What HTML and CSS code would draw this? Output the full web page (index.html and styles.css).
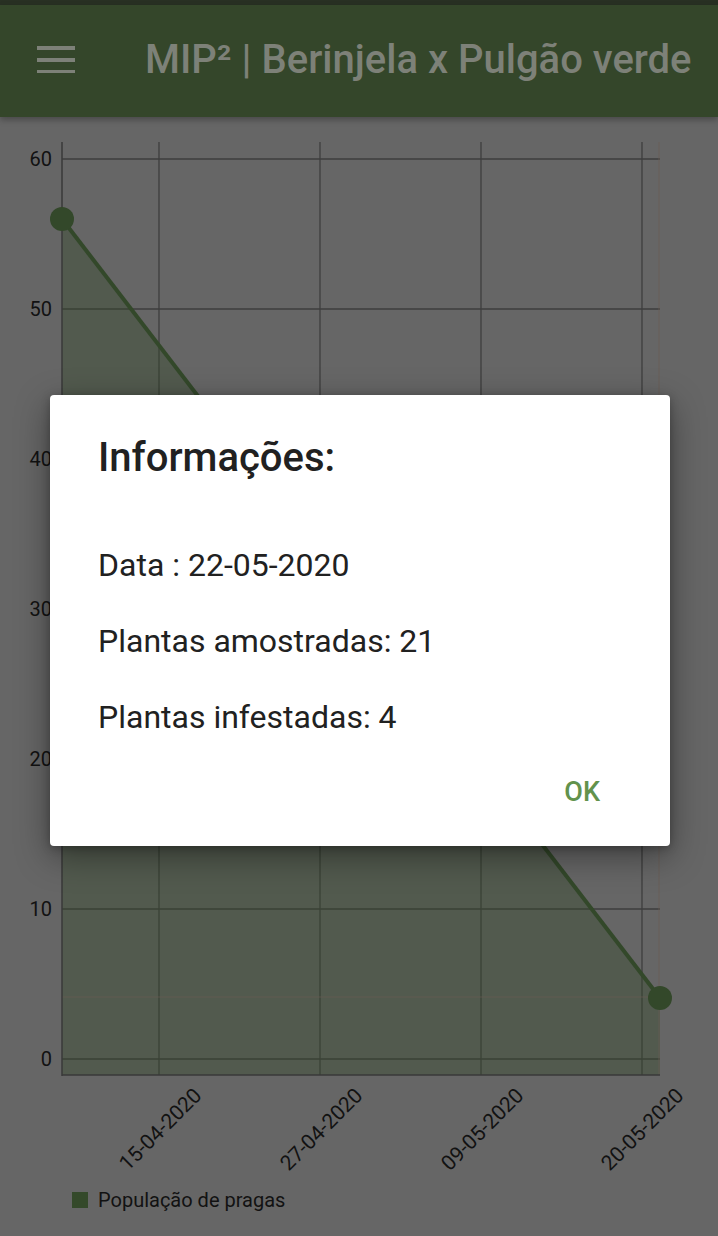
FILE: index.html
```html
<!DOCTYPE html>
<html lang="pt">
<head>
<meta charset="utf-8">
<title>MIP² | Berinjela x Pulgão verde</title>
<link rel="stylesheet" href="styles.css">
</head>
<body>
<div class="status"></div>
<header class="appbar">
  <svg class="menu" width="38" height="28" viewBox="0 0 38 28" aria-hidden="true">
    <rect x="0" y="1" width="38" height="4" fill="#7d8178"/>
    <rect x="0" y="13" width="38" height="4" fill="#7d8178"/>
    <rect x="0" y="25" width="38" height="4" fill="#7d8178"/>
  </svg>
  <h1 class="title">MIP² | Berinjela x Pulgão verde</h1>
</header>
<main class="content">
  <svg class="chart" width="718" height="1065" viewBox="0 117 718 1065">
    <g class="grid">
      <line x1="62" y1="159" x2="660" y2="159"/>
      <line x1="62" y1="309" x2="660" y2="309"/>
      <line x1="62" y1="459" x2="660" y2="459"/>
      <line x1="62" y1="609" x2="660" y2="609"/>
      <line x1="62" y1="759" x2="660" y2="759"/>
      <line x1="62" y1="909" x2="660" y2="909"/>
      <line x1="62" y1="1059" x2="660" y2="1059"/>
      <line x1="159" y1="142" x2="159" y2="1075"/>
      <line x1="320" y1="142" x2="320" y2="1075"/>
      <line x1="481" y1="142" x2="481" y2="1075"/>
      <line x1="642" y1="142" x2="642" y2="1075"/>
    </g>
    <polygon class="area" points="62,219 660,998 660,1075 62,1075"/>
    <g class="highlight">
      <line x1="659" y1="142" x2="659" y2="1075"/>
      <line x1="62" y1="997" x2="660" y2="997"/>
    </g>
    <g class="axis">
      <line x1="62" y1="142" x2="62" y2="1076"/>
      <line x1="62" y1="1075" x2="660" y2="1075"/>
    </g>
    <polyline class="series" points="62,219 660,998"/>
    <circle class="dot" cx="62" cy="219" r="12"/>
    <circle class="dot" cx="660" cy="998" r="12"/>
    <g class="ylabels">
      <text x="52" y="166">60</text>
      <text x="52" y="316">50</text>
      <text x="52" y="466">40</text>
      <text x="52" y="616">30</text>
      <text x="52" y="766">20</text>
      <text x="52" y="916">10</text>
      <text x="52" y="1066">0</text>
    </g>
    <g class="xlabels">
      <text transform="translate(160 1129) rotate(-45)" y="7.5">15-04-2020</text>
      <text transform="translate(321 1129) rotate(-45)" y="7.5">27-04-2020</text>
      <text transform="translate(482 1129) rotate(-45)" y="7.5">09-05-2020</text>
      <text transform="translate(642 1129) rotate(-45)" y="7.5">20-05-2020</text>
    </g>
  </svg>
  <div class="legend">
    <span class="swatch"></span>
    <span class="legend-text">População de pragas</span>
  </div>
</main>

<div class="dialog" role="dialog">
  <h2 class="dialog-title">Informações:</h2>
  <p class="dialog-line">Data : 22-05-2020</p>
  <p class="dialog-line">Plantas amostradas: 21</p>
  <p class="dialog-line">Plantas infestadas: 4</p>
  <div class="dialog-actions">
    <button class="ok">OK</button>
  </div>
</div>
</body>
</html>
```
FILE: styles.css
```css
html, body {
  margin: 0;
  padding: 0;
}
body {
  width: 718px;
  height: 1236px;
  overflow: hidden;
  background: #666666;
  font-family: Roboto, "Liberation Sans", sans-serif;
  position: relative;
}
.status {
  height: 5px;
  background: #283023;
}
.appbar {
  height: 112px;
  background: #34462a;
  display: flex;
  align-items: center;
  padding-left: 37px;
  box-shadow: 0 3px 6px rgba(0, 0, 0, 0.28);
  position: relative;
  z-index: 1;
}
.menu {
  display: block;
  margin-top: -4px;
}
.title {
  margin: -3px 0 0 70px;
  font-size: 40px;
  font-weight: 500;
  color: #7d8178;
  white-space: nowrap;
  line-height: 48px;
}
.content {
  display: flex;
  flex-direction: column;
}
.chart {
  display: block;
}
.grid line {
  stroke: #3e3e3e;
  stroke-width: 1.3;
}
.area {
  fill: rgba(52, 73, 42, 0.4);
}
.highlight line {
  stroke: #6a5d55;
  stroke-width: 1.2;
  opacity: 0.6;
}
.axis line {
  stroke: #3a3a3a;
  stroke-width: 1.5;
}
.series {
  fill: none;
  stroke: #33482a;
  stroke-width: 4;
}
.dot {
  fill: #33482a;
}
.ylabels text {
  font-family: Roboto, "Liberation Sans", sans-serif;
  font-size: 20px;
  fill: #121212;
  text-anchor: end;
}
.xlabels text {
  font-family: Roboto, "Liberation Sans", sans-serif;
  font-size: 21px;
  fill: #121212;
  text-anchor: middle;
}
.legend {
  display: flex;
  align-items: center;
  padding-left: 72px;
  margin-top: 6px;
}
.swatch {
  width: 16px;
  height: 16px;
  background: #34492a;
}
.legend-text {
  margin-left: 10px;
  font-size: 20px;
  color: #121212;
  line-height: 24px;
}
.dialog {
  position: absolute;
  left: 50px;
  top: 395px;
  width: 620px;
  box-sizing: border-box;
  padding: 39px 70px 38px 48px;
  background: #ffffff;
  border-radius: 4px;
  box-shadow: 0 10px 34px rgba(0, 0, 0, 0.4), 0 2px 8px rgba(0, 0, 0, 0.25);
}
.dialog-title {
  margin: 0 0 45px 0;
  font-size: 40px;
  font-weight: 500;
  line-height: 48px;
  color: #212121;
}
.dialog-line {
  margin: 0;
  font-size: 32px;
  line-height: 76px;
  color: #212121;
}
.dialog-actions {
  display: flex;
  justify-content: flex-end;
  margin-top: 21px;
}
.ok {
  border: 0;
  background: transparent;
  padding: 0;
  font-family: Roboto, "Liberation Sans", sans-serif;
  font-size: 27px;
  font-weight: 500;
  line-height: 32px;
  color: #62924c;
}
```
